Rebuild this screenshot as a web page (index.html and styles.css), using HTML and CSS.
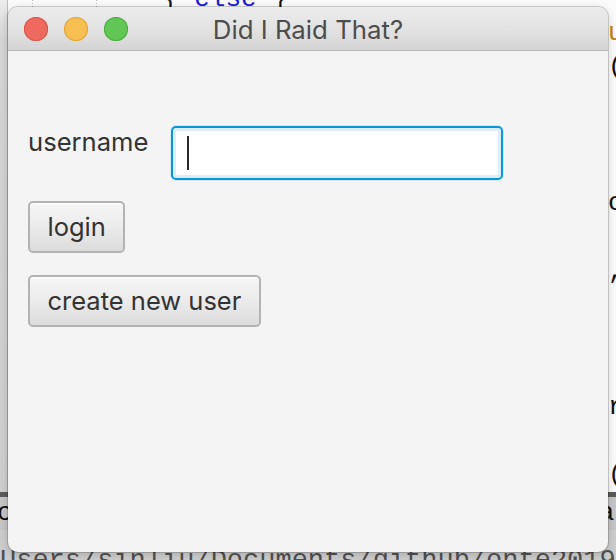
FILE: index.html
```html
<!DOCTYPE html>
<html>
<head>
<meta charset="utf-8">
<title>Did I Raid That?</title>
<link rel="stylesheet" href="styles.css">
</head>
<body>
<div class="desktop">
  <div class="editor">
    <div class="gutter"></div>
    <div class="code">
      <div class="line ind-brace">{ <span class="kw">else</span> }</div>
      <div class="line ind-edge"><span class="fn">u</span></div>
      <div class="line ind-edge">(</div>
      <div class="line"></div>
      <div class="line"></div>
      <div class="line"></div>
      <div class="line ind-edge">c</div>
      <div class="line"></div>
      <div class="line ind-edge">,</div>
      <div class="line"></div>
      <div class="line"></div>
      <div class="line"></div>
      <div class="line ind-edge">r</div>
      <div class="line"></div>
      <div class="line ind-edge">(</div>
    </div>
  </div>
  <div class="divider"></div>
  <div class="panel"><span class="panel-left">c</span><span class="panel-right">al</span></div>
  <div class="path">Users/sinliu/Documents/github/onte2019</div>
</div>

<div class="window">
  <div class="titlebar">
    <div class="lights">
      <span class="light red"></span>
      <span class="light yellow"></span>
      <span class="light green"></span>
    </div>
    <div class="title">Did I Raid That?</div>
    <div class="spacer"></div>
  </div>
  <div class="content">
    <div class="form-row">
      <label class="label">username</label>
      <div class="field"><span class="caret"></span></div>
    </div>
    <button class="btn btn-login">login</button>
    <button class="btn btn-create">create new user</button>
  </div>
</div>
</body>
</html>
```

FILE: styles.css
```css
* { box-sizing: border-box; }

html, body {
  margin: 0;
  padding: 0;
  width: 616px;
  height: 560px;
  overflow: hidden;
  background: #fafafa;
}

body {
  position: relative;
  font-family: "Inter", "Open Sans", sans-serif;
}

/* ---------- background editor ---------- */
.desktop {
  display: grid;
  grid-template-rows: 492px 5px 33px 30px;
  height: 560px;
  overflow: hidden;
  font-family: "Liberation Mono", monospace;
  font-size: 26px;
}

.editor {
  display: grid;
  grid-template-columns: 8px 1fr;
  background: #fbfbfb;
  overflow: hidden;
}

.gutter {
  background: linear-gradient(to bottom, #ececec 0, #d6d6d6 40px, #cfcfcf 100%);
  border-right: 1px solid #bdbdbd;
}

.code {
  margin-left: -8px;
  margin-top: -18px;
  background-image:
    repeating-linear-gradient(to bottom, #bdbdbd 0 1px, transparent 1px 3px),
    repeating-linear-gradient(to bottom, #bdbdbd 0 1px, transparent 1px 3px);
  background-size: 1px 100%, 1px 100%;
  background-position: 32px 0, 96px 0;
  background-repeat: no-repeat;
  color: #111;
  display: flex;
  flex-direction: column;
}

.line {
  height: 34px;
  line-height: 34px;
  white-space: pre;
  flex: none;
}

.ind-brace { padding-left: 163px; }
.ind-edge { padding-left: 608px; }

.kw { color: #1a1ad6; }
.fn { color: #c9830f; }

.divider { background: #5b5b5b; }

.panel {
  display: flex;
  align-items: center;
  background: #c6c6c6;
  color: #111;
  line-height: 33px;
  overflow: hidden;
}

.panel-left { margin-left: -3px; }
.panel-right { margin-left: auto; margin-right: -14px; }

.path {
  background: #cdcdcd;
  color: #505050;
  font-size: 27px;
  line-height: 30px;
  padding-top: 16px;
  white-space: pre;
  overflow: hidden;
}

/* ---------- window ---------- */
.window {
  position: absolute;
  left: 8px;
  top: 7px;
  width: 600px;
  height: 545px;
  border-radius: 10px;
  overflow: hidden;
  background: #f4f4f4;
  box-shadow: 0 0 0 1px rgba(0, 0, 0, 0.16), 0 2px 10px rgba(0, 0, 0, 0.18);
  display: flex;
  flex-direction: column;
}

.titlebar {
  height: 44px;
  flex: none;
  display: grid;
  grid-template-columns: 1fr auto 1fr;
  align-items: center;
  background: linear-gradient(to bottom, #ececec 0%, #e3e3e3 50%, #d4d4d4 100%);
  border-bottom: 1px solid #b4b4b4;
}

.lights {
  display: flex;
  gap: 16px;
  padding-left: 16px;
}

.light {
  width: 24px;
  height: 24px;
  border-radius: 50%;
  display: block;
}

.red { background: #ee6a5f; box-shadow: inset 0 0 0 1px #d9544a; }
.yellow { background: #f6bf4f; box-shadow: inset 0 0 0 1px #dea43a; }
.green { background: #62c655; box-shadow: inset 0 0 0 1px #4eaa41; }

.title {
  font-size: 25.8px;
  color: #4d4d4d;
  line-height: 30px;
  padding-top: 2px;
}

.content {
  flex: 1;
  padding: 75px 20px 0 20px;
  display: flex;
  flex-direction: column;
  align-items: flex-start;
}

.form-row {
  display: grid;
  grid-template-columns: 143px 332px;
  align-items: start;
}

.label {
  font-size: 25.6px;
  color: #333;
  line-height: 31px;
}

.field {
  height: 54px;
  border: 2px solid #0898d3;
  border-radius: 5px;
  background: #fff;
  box-shadow: inset 0 0 0 3px #ddeef9, 0 0 0 1px #d6eaf6;
  padding: 8px 0 0 14px;
}

.caret {
  display: block;
  width: 2px;
  height: 34px;
  background: #2a2a2a;
}

.btn {
  font-family: "Inter", "Open Sans", sans-serif;
  font-size: 25.5px;
  color: #333;
  height: 52px;
  padding: 0 17.5px;
  border: 2px solid #b3b3b3;
  border-radius: 5px;
  background: linear-gradient(to bottom, #f6f6f6 0%, #ebebeb 50%, #dcdcdc 100%);
  box-shadow: inset 0 1px 0 #ffffff;
  line-height: 46px;
}

.btn-login { margin-top: 21px; }
.btn-create { margin-top: 22px; }
```
